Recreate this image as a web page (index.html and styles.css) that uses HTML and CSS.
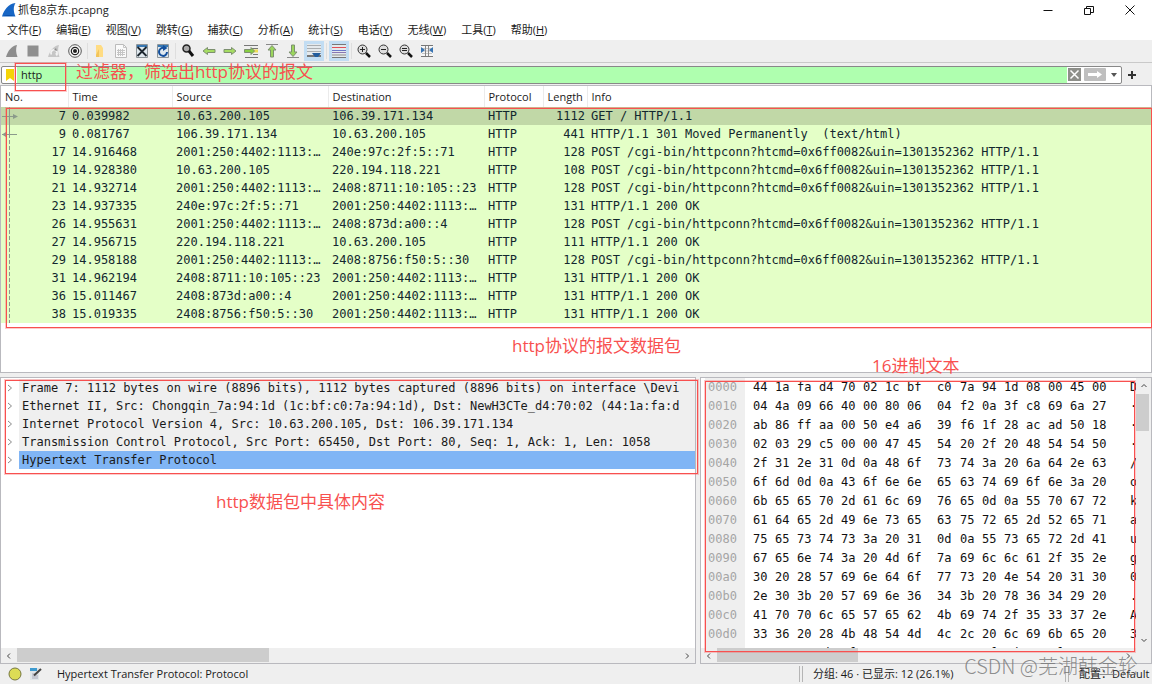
FILE: index.html
```html
<!DOCTYPE html>
<html lang="zh-CN">
<head>
<meta charset="utf-8">
<title>抓包8京东.pcapng</title>
<link rel="stylesheet" href="styles.css">
</head>
<body>
<header class="titlebar">
  <svg class="logo" viewBox="0 0 14 14"><path d="M0 13.500C2 7 6 1 13.500 0C11 4 11.500 9 13.500 13.500Z" fill="#1766c5"/><path d="M1 13Q6 11 12.500 13Z" fill="#0b4fa6"/></svg>
  <h1 class="title">抓包8京东.pcapng</h1>
  <div class="window-buttons">
    <button class="winbtn" aria-label="最小化"><svg viewBox="0 0 12 12"><path d="M1.500 6.500h9" stroke="#111"/></svg></button>
    <button class="winbtn" aria-label="还原"><svg viewBox="0 0 12 12" fill="none" stroke="#111"><path d="M1.500 4.500h6v6h-6zM3.500 4.500v-2h7v6h-3"/></svg></button>
    <button class="winbtn" aria-label="关闭"><svg viewBox="0 0 12 12"><path d="M1.500 1.500l9 9M10.500 1.500l-9 9" stroke="#111"/></svg></button>
  </div>
</header>
<nav class="menubar">
  <button class="menu">文件(<u>F</u>)</button>
  <button class="menu">编辑(<u>E</u>)</button>
  <button class="menu">视图(<u>V</u>)</button>
  <button class="menu">跳转(<u>G</u>)</button>
  <button class="menu">捕获(<u>C</u>)</button>
  <button class="menu">分析(<u>A</u>)</button>
  <button class="menu">统计(<u>S</u>)</button>
  <button class="menu">电话(<u>Y</u>)</button>
  <button class="menu">无线(<u>W</u>)</button>
  <button class="menu">工具(<u>T</u>)</button>
  <button class="menu">帮助(<u>H</u>)</button>
</nav>
<div class="toolbar">
  <button class="tool" aria-label="开始捕获"><svg viewBox="0 0 16 16"><path d="M2 14C4 8 7 3 13 2C11.500 6 12 10 13.500 14Z" fill="#8d8d8d"/></svg></button>
  <button class="tool" aria-label="停止捕获"><svg viewBox="0 0 16 16"><path d="M2.500 2.500h11v11h-11z" fill="#8f8f8f"/></svg></button>
  <button class="tool" aria-label="重新捕获"><svg viewBox="0 0 16 16"><path d="M2 14C4 8 7 3 13 2C11.500 6 12 10 13.500 14Z" fill="#c6c6c6"/><path d="M5.500 11.500a3 3 0 1 1 5 0" fill="none" stroke="#f4f4f4" stroke-width="1.500"/><path d="M9 10.500l3 0-1 3z" fill="#f4f4f4"/><path d="M8 7l2-2 1 3z" fill="#8a8a8a"/></svg></button>
  <button class="tool" aria-label="捕获选项"><svg viewBox="0 0 16 16"><circle cx="8" cy="8" r="6.300" fill="#fafafa" stroke="#555"/><circle cx="8" cy="8" r="3.700" fill="none" stroke="#222" stroke-width="1.200"/><circle cx="8" cy="8" r="2" fill="#222"/></svg></button>
  <span class="sep"></span>
  <button class="tool" aria-label="打开"><svg viewBox="0 0 16 16"><path d="M4 2h5l2 3v9H4z" fill="#ffdc83"/><path d="M4 12l3-6v8H4z" fill="#f2c45b"/></svg></button>
  <button class="tool" aria-label="保存"><svg viewBox="0 0 16 16"><path d="M2.500 1.500h8l3 3v10h-11z" fill="#fafafa" stroke="#bbb"/><path d="M10.500 1.500v3h3M4 7.500h8M4 9.500h8M4 11.500h8M5.500 6v7M7.500 6v7M9.500 6v7" fill="none" stroke="#c5c5c5"/></svg></button>
  <button class="tool" aria-label="关闭文件"><svg viewBox="0 0 16 16"><path d="M2.500 1.500h11v13h-11z" fill="#dfe8ee" stroke="#8c9499"/><path d="M3 2h10v2H3z" fill="#3878b3"/><path d="M3.500 4l9 9M12.500 4l-9 9" stroke="#1d272f" stroke-width="1.800"/></svg></button>
  <button class="tool" aria-label="重新加载"><svg viewBox="0 0 16 16"><path d="M2.500 1.500h11v13h-11z" fill="#dfe8ee" stroke="#8c9499"/><path d="M3 2h10v2H3z" fill="#3878b3"/><path d="M12 9a4 4 0 1 1-3-4" fill="none" stroke="#134f9c" stroke-width="2"/><path d="M8 2l4.500 3L8 8z" fill="#134f9c"/></svg></button>
  <span class="sep"></span>
  <button class="tool" aria-label="查找"><svg viewBox="0 0 16 16"><circle cx="6.500" cy="5.500" r="3.500" fill="#aaa" stroke="#222" stroke-width="1.500"/><path d="M9 8l4 5" stroke="#111" stroke-width="3"/></svg></button>
  <button class="tool" aria-label="后退"><svg viewBox="0 0 16 16"><path d="M2 8l4.500-3.500v2H14v3H6.500v2z" fill="#a5dc62" stroke="#7d9070"/></svg></button>
  <button class="tool" aria-label="前进"><svg viewBox="0 0 16 16"><path d="M14 8L9.500 4.500v2H2v3h7.500v2z" fill="#a5dc62" stroke="#7d9070"/></svg></button>
  <button class="tool" aria-label="转到分组"><svg viewBox="0 0 16 16"><path d="M1 2.500h14M8 5.500h7M10 11.500h5M2 14.500h13" stroke="#777"/><path d="M9 6.500h6v3H9z" fill="#eddc57"/><path d="M11.500 8L8 4.500v2H1.500v3H8v2z" fill="#88ce43" stroke="#7d9070"/></svg></button>
  <button class="tool" aria-label="首个分组"><svg viewBox="0 0 16 16"><path d="M2 1.500h12" stroke="#888"/><path d="M8 2.500l4 4.500H9.500v7h-3V7H4z" fill="#9bd65c" stroke="#7d9070"/></svg></button>
  <button class="tool" aria-label="末个分组"><svg viewBox="0 0 16 16"><path d="M2 14.500h12" stroke="#888"/><path d="M8 13.500L4 9h2.500V2h3v7H12z" fill="#9bd65c" stroke="#7d9070"/></svg></button>
  <button class="tool tool-on" aria-label="自动滚动" aria-pressed="true"><svg viewBox="0 0 16 16"><path d="M1 1h14v11H1z" fill="#e4e9ec"/><path d="M1 2.500h14M1 5.500h14M1 8.500h14" stroke="#a9adb0"/><path d="M1 13h14" stroke="#777" stroke-width="2"/><path d="M6 10h9l-3 4H9z" fill="#225d9d"/></svg></button>
  <span class="sep"></span>
  <button class="tool tool-on" aria-label="着色" aria-pressed="true"><svg viewBox="0 0 16 16"><path d="M1 1h14v14H1z" fill="#e4e9ec"/><path d="M1 1.500h14M1 14.500h14" stroke="#777"/><path d="M1 4.500h14" stroke="#e15057"/><path d="M1 7.500h14" stroke="#6b78c9"/><path d="M1 9.500h14" stroke="#8977b2"/><path d="M1 12h14" stroke="#8e8e8e"/></svg></button>
  <span class="sep"></span>
  <button class="tool" aria-label="放大"><svg viewBox="0 0 16 16"><circle cx="6.500" cy="6.500" r="4.500" fill="#ddd" stroke="#333"/><path d="M4 6.500h5M6.500 4v5" stroke="#222"/><path d="M10 10l4 4" stroke="#111" stroke-width="2.500"/></svg></button>
  <button class="tool" aria-label="缩小"><svg viewBox="0 0 16 16"><circle cx="6.500" cy="6.500" r="4.500" fill="#ddd" stroke="#333"/><path d="M4 6.500h5" stroke="#222"/><path d="M10 10l4 4" stroke="#111" stroke-width="2.500"/></svg></button>
  <button class="tool" aria-label="正常大小"><svg viewBox="0 0 16 16"><circle cx="6.500" cy="6.500" r="4.500" fill="#ddd" stroke="#333"/><path d="M4 5.500h5M4 7.500h5" stroke="#222"/><path d="M10 10l4 4" stroke="#111" stroke-width="2.500"/></svg></button>
  <button class="tool" aria-label="调整列宽"><svg viewBox="0 0 16 16"><path d="M2 3h12v10H2z" fill="#f6f6f6"/><path d="M2 2.500h12M2 13.500h12" stroke="#777"/><path d="M3 5.500h10M3 8h10M3 10.500h10" stroke="#c4c4c4"/><path d="M6.500 3v10M9.500 3v10" stroke="#888"/><path d="M2 4l4 3-4 3zM14 4l-4 3 4 3z" fill="#3874b2"/></svg></button>
</div>
<div class="filterbar">
  <div class="filterbox">
    <button class="bookmark" aria-label="书签"><svg viewBox="0 0 8 12"><path d="M0 0h8v12L4 9l-4 3z" fill="#f5d407"/></svg></button>
    <input class="filter" type="text" value="http" aria-label="显示过滤器">
    <button class="chip" aria-label="清除"><svg viewBox="0 0 13 13"><path d="M0 0h13v13H0z" fill="#8e8f8a"/><path d="M2.500 2.500l8 8M10.500 2.500l-8 8" stroke="#fff" stroke-width="1.500"/></svg></button>
    <button class="chip chip-wide" aria-label="应用"><svg viewBox="0 0 22 13"><rect width="22" height="13" rx="1" fill="#bfbfbf"/><path d="M4 5h9V3l5 3.500-5 3.500V8H4z" fill="#fff"/></svg></button>
    <button class="chip chip-drop" aria-label="历史"><svg viewBox="0 0 6 4"><path d="M0 0h6L3 4z" fill="#555"/></svg></button>
  </div>
  <button class="add" aria-label="添加"><svg viewBox="0 0 8 8"><path d="M4 0v8M0 4h8" stroke="#333" stroke-width="2"/></svg></button>
  <span class="mark mark-filter"></span>
  <span class="note note-filter">过滤器，筛选出http协议的报文</span>
</div>
<main class="panes">
  <section class="pane packets">
    <table class="packet-table">
      <colgroup><col class="c-no"><col class="c-time"><col class="c-addr"><col class="c-addr"><col class="c-proto"><col class="c-len"><col></colgroup>
      <thead><tr><th>No.</th><th>Time</th><th>Source</th><th>Destination</th><th>Protocol</th><th>Length</th><th>Info</th></tr></thead>
      <tbody id="packets"></tbody>
    </table>
    <svg class="flow" viewBox="0 0 18 216" fill="none" stroke="#8b9a8b"><path d="M8.500 0v27"/><path d="M8.500 27v189" stroke-dasharray="4 2"/><path d="M1 9.500h11M1 27.500h15"/><path d="M12 7l5 2.500-5 2.500zM5 25l-4 2.500 4 2.500z" fill="#8b9a8b" stroke="none"/></svg>
    <span class="mark mark-packets"></span>
    <span class="note note-packets">http协议的报文数据包</span>
    <span class="note note-hex">16进制文本</span>
  </section>
  <div class="lower">
    <section class="pane details">
      <ul class="tree">
        <li class="node"><svg class="arrow" viewBox="0 0 6 8"><path d="M1 1l3.500 3L1 7"/></svg><span class="node-text">Frame 7: 1112 bytes on wire (8896 bits), 1112 bytes captured (8896 bits) on interface \Devi</span></li>
        <li class="node"><svg class="arrow" viewBox="0 0 6 8"><path d="M1 1l3.500 3L1 7"/></svg><span class="node-text">Ethernet II, Src: Chongqin_7a:94:1d (1c:bf:c0:7a:94:1d), Dst: NewH3CTe_d4:70:02 (44:1a:fa:d</span></li>
        <li class="node"><svg class="arrow" viewBox="0 0 6 8"><path d="M1 1l3.500 3L1 7"/></svg><span class="node-text">Internet Protocol Version 4, Src: 10.63.200.105, Dst: 106.39.171.134</span></li>
        <li class="node"><svg class="arrow" viewBox="0 0 6 8"><path d="M1 1l3.500 3L1 7"/></svg><span class="node-text">Transmission Control Protocol, Src Port: 65450, Dst Port: 80, Seq: 1, Ack: 1, Len: 1058</span></li>
        <li class="node node-on"><svg class="arrow" viewBox="0 0 6 8"><path d="M1 1l3.500 3L1 7"/></svg><span class="node-text">Hypertext Transfer Protocol</span></li>
      </ul>
      <div class="hscroll">
        <svg class="chev" viewBox="0 0 8 8"><path d="M5 1.500L2.500 4 5 6.500"/></svg>
        <div class="track"><div class="thumb thumb-details"></div></div>
        <svg class="chev" viewBox="0 0 8 8"><path d="M3 1.500L5.500 4 3 6.500"/></svg>
      </div>
      <span class="mark mark-details"></span>
      <span class="note note-details">http数据包中具体内容</span>
    </section>
    <section class="pane bytes">
      <div class="bytes-body">
        <div class="hexview"><table class="hex"><tbody id="hex"></tbody></table></div>
        <div class="vscroll">
          <svg class="chev" viewBox="0 0 8 8"><path d="M1.500 5L4 2.500 6.500 5"/></svg>
          <div class="track"><div class="vthumb"></div></div>
          <svg class="chev" viewBox="0 0 8 8"><path d="M1.500 3L4 5.500 6.500 3"/></svg>
        </div>
      </div>
      <div class="hscroll">
        <svg class="chev" viewBox="0 0 8 8"><path d="M5 1.500L2.500 4 5 6.500"/></svg>
        <div class="track"><div class="thumb thumb-bytes"></div></div>
        <svg class="chev chev-end" viewBox="0 0 8 8"><path d="M3 1.500L5.500 4 3 6.500"/></svg>
      </div>
      <span class="mark mark-bytes"></span>
    </section>
  </div>
</main>
<footer class="status">
  <svg class="led" viewBox="0 0 14 14"><circle cx="7" cy="7" r="6" fill="#dcdc55" stroke="#777840"/></svg>
  <svg class="edit" viewBox="0 0 14 14"><path d="M1 1h9v12H1z" fill="#dfe5e8"/><path d="M1 1h7v3H1z" fill="#3f9bd0"/><path d="M3 7h3M3 9h6M3 11h6" stroke="#aab"/><path d="M5 8.500l7-6.500" stroke="#444" stroke-width="2"/></svg>
  <span class="status-text">Hypertext Transfer Protocol: Protocol</span>
  <span class="status-cell status-count">分组: 46 · 已显示: 12 (26.1%)</span>
  <span class="status-cell status-profile">配置：Default</span>
  <span class="watermark">CSDN @芜湖韩金轮</span>
</footer>
<script src="script.js"></script>
</body>
</html>
```
FILE: styles.css
```css
* { box-sizing: border-box; }
body {
  margin: 0;
  height: 100vh;
  display: flex;
  flex-direction: column;
  overflow: hidden;
  background: #efefef;
  color: #1a1a1a;
  font: 11px/16px "Open Sans", "Noto Sans CJK SC", sans-serif;
}
button { padding: 0; border: 0; background: none; font: inherit; color: inherit; }
svg { display: block; flex: none; }

.titlebar { display: flex; align-items: center; height: 20px; padding: 0 2px; background: #fff; }
.logo { width: 14px; height: 14px; }
.title { margin: 0 auto 0 2px; font-size: 11px; font-weight: 400; }
.window-buttons { display: flex; }
.winbtn { width: 41px; height: 20px; display: grid; place-items: center; }
.winbtn svg { width: 12px; height: 12px; }

.menubar { display: flex; gap: 15px; height: 20px; padding-left: 7px; background: #fff; }
.menu { line-height: 20px; white-space: nowrap; }

.toolbar { display: flex; align-items: center; gap: 1px; height: 23px; padding-left: 2px; border-bottom: 1px solid #c9c9c9; }
.tool { width: 20px; height: 20px; display: grid; place-items: center; }
.tool svg { width: 16px; height: 16px; }
.tool-on { background: #c2ddf3; }
.sep { width: 1px; height: 16px; margin: 0 1px; background: #dedede; }

.filterbar { position: relative; display: flex; align-items: center; gap: 6px; height: 22px; padding: 1px 16px 0 1px; }
.filterbox { flex: 1; display: flex; align-items: center; height: 18px; border: 1px solid #888; border-radius: 2px; background: #fff; }
.bookmark { width: 15px; display: grid; place-items: center; }
.bookmark svg { width: 8px; height: 12px; }
.filter { flex: 1; min-width: 0; height: 16px; padding: 0 4px; border: 0; outline: 0; background: #afffaf; font: inherit; color: #1a1a1a; }
.chip { margin-left: 1px; }
.chip svg { width: 13px; height: 13px; }
.chip-wide { margin-left: 3px; }
.chip-wide svg { width: 22px; }
.chip-drop { width: 14px; display: grid; place-items: center; }
.chip-drop svg { width: 6px; height: 4px; }
.add svg { width: 8px; height: 8px; }

.panes { flex: 1; min-height: 0; display: grid; grid-template-rows: minmax(0, 1fr) minmax(0, 1fr); gap: 4px; }
.pane { position: relative; min-width: 0; background: #fff; border: 1px solid #b9b9be; }
.packet-table { width: 100%; table-layout: fixed; border-collapse: collapse; }
.c-no { width: 67px; }
.c-time { width: 104px; }
.c-addr { width: 156px; }
.c-proto { width: 59px; }
.c-len { width: 44px; }
.packet-table th { height: 21px; padding: 1px 0 0 4px; text-align: left; font-weight: 400; border-right: 1px solid #ebebeb; }
.packet-table th:last-child { border-right: 0; }
.packet-table td {
  height: 18px;
  padding: 0 2px 0 4px;
  overflow: hidden;
  white-space: pre;
  text-overflow: ellipsis;
  background: #e4ffc7;
  color: #12272e;
  font: 12px/18px "DejaVu Sans Mono", monospace;
}
.packet-table .packet-on td { background: #c1d8a7; }
.packet-table .num { text-align: right; padding-left: 0; }
.packet-table .len { text-align: right; }
.flow { position: absolute; left: 0; top: 21px; width: 18px; height: 216px; }

.lower { display: grid; grid-template-columns: minmax(0, 696fr) minmax(0, 452fr); grid-template-rows: minmax(0, 1fr); gap: 4px; }
.details, .bytes { display: flex; flex-direction: column; }
.tree { flex: 1; min-height: 0; margin: 0; padding: 1px 0 0; list-style: none; overflow: hidden; }
.node { display: flex; align-items: center; gap: 6px; padding-left: 6px; }
.node-text { flex: 1; min-width: 0; padding-left: 3px; overflow: hidden; white-space: pre; background: #efefef; font: 12px/18px "DejaVu Sans Mono", monospace; }
.node-on .node-text { background: #80b5f5; }
.arrow { width: 6px; height: 8px; fill: none; stroke: #8a8a8a; }

.hscroll { display: flex; align-items: center; height: 15px; background: #efefef; }
.chev { width: 8px; height: 8px; margin: 0 4px; fill: none; stroke: #444; }
.track { flex: 1; align-self: stretch; }
.thumb { height: 14px; background: #cdcdcd; }
.thumb-details { width: 38%; }
.thumb-bytes { width: 35%; }
.chev-end { margin-right: 19px; }
.bytes-body { flex: 1; min-height: 0; display: flex; }
.hexview { flex: 1; min-width: 0; overflow: hidden; padding-left: 4px; }
.hex { width: 431px; table-layout: fixed; border-collapse: collapse; font: 12px/19px "DejaVu Sans Mono", monospace; color: #111; }
.hex td { width: 22px; height: 19px; padding: 0; }
.hex .offset { width: 48px; padding-left: 3px; color: #a5a5a5; background: linear-gradient(to right, #efefef 40px, #fff 40px); }
.hex .mid { width: 31px; padding-left: 8px; }
.hex .ascii { width: 22px; padding-left: 16px; white-space: nowrap; overflow: hidden; }
.vscroll { display: flex; flex-direction: column; align-items: center; width: 15px; padding: 4px 0; background: #efefef; }
.vscroll .track { width: 13px; padding-top: 4px; }
.vthumb { height: 37px; background: #cdcdcd; }

.mark { position: absolute; border: 1px solid #f8504f; outline: 1px solid rgba(248, 80, 79, .3); pointer-events: none; }
.mark-filter { left: 15px; top: 0; width: 51px; height: 28px; z-index: 2; }
.mark-packets { left: 5px; right: -1px; top: 22px; height: 220px; }
.mark-details { left: 4px; right: -3px; top: 2px; height: 94px; z-index: 2; }
.mark-bytes { left: 4px; right: 16px; top: 3px; bottom: 11px; }
.note { position: absolute; color: #f8504f; font: 17px/22px "Open Sans", "Noto Sans CJK SC", sans-serif; white-space: nowrap; }
.note-filter { left: 76px; top: -2px; }
.note-packets { left: 511px; bottom: 15px; }
.note-hex { left: 871px; bottom: -5px; z-index: 2; }
.note-details { left: 215px; top: 113px; }

.status { position: relative; display: flex; align-items: center; height: 20px; padding: 0 2px 0 8px; }
.led, .edit { width: 14px; height: 14px; }
.edit { margin-left: 7px; }
.status-text { flex: 1; margin-left: 14px; }
.status-cell { padding-left: 10px; border-left: 4px double #b5b5b5; white-space: nowrap; }
.status-count { width: 266px; }
.status-profile { width: 85px; }
.watermark { position: absolute; right: 14px; bottom: 6px; color: rgba(115, 115, 115, .8); font: 20px/24px "Noto Sans CJK SC", sans-serif; font-weight: 300; white-space: nowrap; }
```
FILE: script.js
```js
const post = "POST /cgi-bin/httpconn?htcmd=0x6ff0082&uin=1301352362 HTTP/1.1";
const ok = "HTTP/1.1 200 OK";
const local6 = "2001:250:4402:1113:…";
const packets = [
  ["7", "0.039982", "10.63.200.105", "106.39.171.134", "1112", "GET / HTTP/1.1"],
  ["9", "0.081767", "106.39.171.134", "10.63.200.105", "441", "HTTP/1.1 301 Moved Permanently  (text/html)"],
  ["17", "14.916468", local6, "240e:97c:2f:5::71", "128", post],
  ["19", "14.928380", "10.63.200.105", "220.194.118.221", "108", post],
  ["21", "14.932714", local6, "2408:8711:10:105::23", "128", post],
  ["23", "14.937335", "240e:97c:2f:5::71", local6, "131", ok],
  ["26", "14.955631", local6, "2408:873d:a00::4", "128", post],
  ["27", "14.956715", "220.194.118.221", "10.63.200.105", "111", ok],
  ["29", "14.958188", local6, "2408:8756:f50:5::30", "128", post],
  ["31", "14.962194", "2408:8711:10:105::23", local6, "131", ok],
  ["36", "15.011467", "2408:873d:a00::4", local6, "131", ok],
  ["38", "15.019335", "2408:8756:f50:5::30", local6, "131", ok]
];
const dump = [
  "44 1a fa d4 70 02 1c bf c0 7a 94 1d 08 00 45 00",
  "04 4a 09 66 40 00 80 06 04 f2 0a 3f c8 69 6a 27",
  "ab 86 ff aa 00 50 e4 a6 39 f6 1f 28 ac ad 50 18",
  "02 03 29 c5 00 00 47 45 54 20 2f 20 48 54 54 50",
  "2f 31 2e 31 0d 0a 48 6f 73 74 3a 20 6a 64 2e 63",
  "6f 6d 0d 0a 43 6f 6e 6e 65 63 74 69 6f 6e 3a 20",
  "6b 65 65 70 2d 61 6c 69 76 65 0d 0a 55 70 67 72",
  "61 64 65 2d 49 6e 73 65 63 75 72 65 2d 52 65 71",
  "75 65 73 74 73 3a 20 31 0d 0a 55 73 65 72 2d 41",
  "67 65 6e 74 3a 20 4d 6f 7a 69 6c 6c 61 2f 35 2e",
  "30 20 28 57 69 6e 64 6f 77 73 20 4e 54 20 31 30",
  "2e 30 3b 20 57 69 6e 36 34 3b 20 78 36 34 29 20",
  "41 70 70 6c 65 57 65 62 4b 69 74 2f 35 33 37 2e",
  "33 36 20 28 4b 48 54 4d 4c 2c 20 6c 69 6b 65 20",
  "47 65 63 6b 6f 29 20 43 68 72 6f 6d 65 2f 31 30"
];

function addCell(row, text, cls) {
  const cell = row.insertCell();
  cell.textContent = text;
  if (cls) cell.className = cls;
}

const packetBody = document.getElementById("packets");
packets.forEach(([no, time, src, dst, len, info], i) => {
  const row = packetBody.insertRow();
  if (i === 0) row.className = "packet-on";
  addCell(row, no, "num");
  addCell(row, time);
  addCell(row, src);
  addCell(row, dst);
  addCell(row, "HTTP");
  addCell(row, len, "len");
  addCell(row, info);
});

const hexBody = document.getElementById("hex");
dump.forEach((line, i) => {
  const row = hexBody.insertRow();
  const bytes = line.split(" ");
  addCell(row, (i * 16).toString(16).padStart(4, "0"), "offset");
  bytes.forEach((byte, n) => addCell(row, byte, n === 8 ? "mid" : ""));
  const code = parseInt(bytes[0], 16);
  addCell(row, code > 32 && code < 127 ? String.fromCharCode(code) : "·", "ascii");
});
```
